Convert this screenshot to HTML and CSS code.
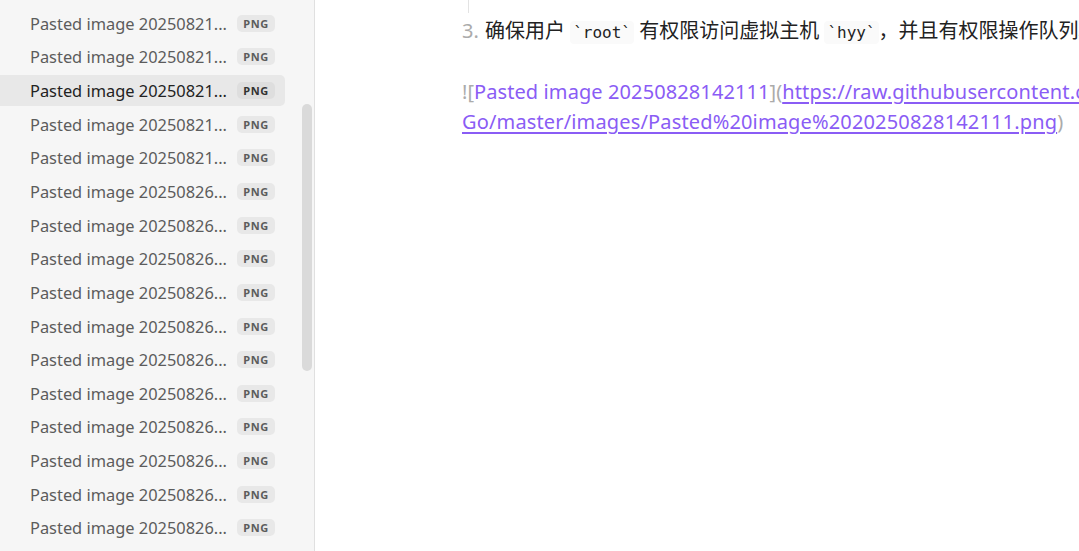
FILE: index.html
```html
<!DOCTYPE html>
<html lang="zh-CN">
<head>
<meta charset="utf-8">
<title>Obsidian</title>
<link rel="stylesheet" href="styles.css">
</head>
<body>
<div class="app">
  <aside class="sidebar">
    <div class="file-list">
      <div class="file"><span class="name">Pasted image 20250821...</span><span class="tag">PNG</span></div>
      <div class="file"><span class="name">Pasted image 20250821...</span><span class="tag">PNG</span></div>
      <div class="file active"><span class="name">Pasted image 20250821...</span><span class="tag">PNG</span></div>
      <div class="file"><span class="name">Pasted image 20250821...</span><span class="tag">PNG</span></div>
      <div class="file"><span class="name">Pasted image 20250821...</span><span class="tag">PNG</span></div>
      <div class="file"><span class="name">Pasted image 20250826...</span><span class="tag">PNG</span></div>
      <div class="file"><span class="name">Pasted image 20250826...</span><span class="tag">PNG</span></div>
      <div class="file"><span class="name">Pasted image 20250826...</span><span class="tag">PNG</span></div>
      <div class="file"><span class="name">Pasted image 20250826...</span><span class="tag">PNG</span></div>
      <div class="file"><span class="name">Pasted image 20250826...</span><span class="tag">PNG</span></div>
      <div class="file"><span class="name">Pasted image 20250826...</span><span class="tag">PNG</span></div>
      <div class="file"><span class="name">Pasted image 20250826...</span><span class="tag">PNG</span></div>
      <div class="file"><span class="name">Pasted image 20250826...</span><span class="tag">PNG</span></div>
      <div class="file"><span class="name">Pasted image 20250826...</span><span class="tag">PNG</span></div>
      <div class="file"><span class="name">Pasted image 20250826...</span><span class="tag">PNG</span></div>
      <div class="file"><span class="name">Pasted image 20250826...</span><span class="tag">PNG</span></div>
    </div>
    <div class="scrollbar"></div>
  </aside>
  <main class="editor">
    <div class="content">
      <div class="line prev"><span class="guide"></span></div>
      <div class="line"><span class="list-num">3.</span><span class="text">确保用户 <code class="code">`root`</code> 有权限访问虚拟主机 <code class="code">`hyy`</code>，并且有权限操作队列和交换机。</span></div>
      <div class="line empty"></div>
      <div class="line"><span class="fmt">![</span><span class="alt">Pasted image 20250828142111</span><span class="fmt">](</span><a class="url">https://raw.githubusercontent.com/hyy/Note-Go/master/images/</a></div>
      <div class="line"><a class="url">Go/master/images/Pasted%20image%2020250828142111.png</a><span class="fmt">)</span></div>
    </div>
  </main>
</div>
</body>
</html>
```

FILE: styles.css
```css
* { box-sizing: border-box; }
html, body { margin: 0; padding: 0; height: 100%; overflow: hidden; }
body {
  font-family: "Noto Sans", "Noto Sans CJK SC", sans-serif;
  background: #ffffff;
  color: #222222;
}
.app {
  display: flex;
  height: 551px;
  width: 1079px;
}
.sidebar {
  position: relative;
  width: 315px;
  flex: none;
  background: #f6f6f6;
  border-right: 1px solid #e0e0e0;
}
.file-list {
  display: flex;
  flex-direction: column;
  gap: 2.67px;
  padding-top: 7.6px;
  width: 285px;
}
.file {
  height: 31px;
  display: flex;
  align-items: center;
  padding-left: 30px;
  border-radius: 0 5px 5px 0;
  color: #5c5c5c;
  font-size: 16.4px;
  white-space: nowrap;
}
.file.active {
  background: #e8e8e8;
  color: #222222;
}
.name { width: 207px; overflow: hidden; }
.tag {
  display: inline-flex;
  align-items: center;
  justify-content: center;
  width: 38px;
  height: 17px;
  border-radius: 5px;
  background: #e8e8e8;
  color: #5c5c5c;
  font-size: 11px;
  font-weight: 700;
  letter-spacing: 0.06em;
}
.file.active .tag { background: #dedede; color: #333; }
.scrollbar {
  position: absolute;
  left: 302px;
  top: 104px;
  width: 10px;
  height: 267px;
  border-radius: 5px;
  background: #dadada;
}
.editor {
  flex: 1;
  overflow: hidden;
  background: #ffffff;
}
.content {
  padding-left: 147px;
  font-size: 20px;
  white-space: nowrap;
}
.line {
  height: 30px;
  line-height: 30px;
  display: flex;
  align-items: baseline;
}
.line.prev { height: 16px; }
.guide {
  display: block;
  margin-left: 6px;
  width: 1px;
  height: 13px;
  background: #e3e3e3;
}
.list-num { color: #ababab; width: 23px; flex: none; }
.code {
  font-family: "DejaVu Sans Mono", monospace;
  font-size: 16px;
  background: #fafafa;
  border-radius: 4px;
  padding: 2px 3px;
}
.empty { height: 31px; }
.fmt { color: #ababab; }
.alt { color: #8a5cf5; letter-spacing: 0.1px; }
.url { color: #8a5cf5; text-decoration: underline; text-underline-offset: 3px; letter-spacing: 0.15px; }
```
